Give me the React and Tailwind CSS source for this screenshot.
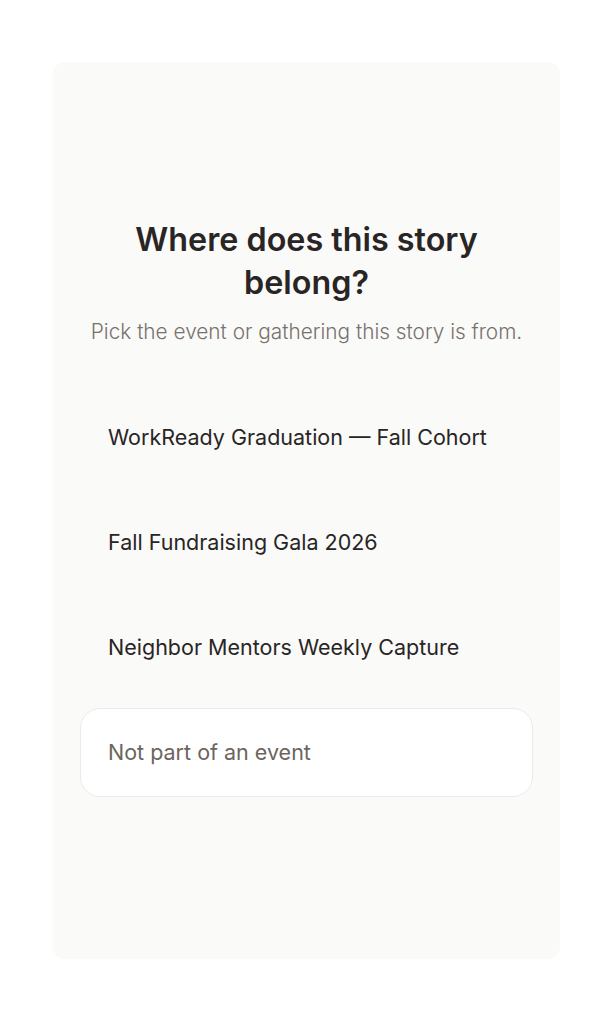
const EVENTS = [
  "WorkReady Graduation — Fall Cohort",
  "Fall Fundraising Gala 2026",
  "Neighbor Mentors Weekly Capture",
];

export default function App() {
  return (
    <div
      className="min-h-screen bg-white px-[53px] pt-[62px] pb-[65px] flex"
      style={{ fontFamily: "Inter, 'Noto Sans', sans-serif" }}
    >
      <div className="flex-1 rounded-[12px] bg-[#fafaf9] px-[27px] pb-[6px] flex flex-col justify-center">
        <div className="text-center">
          <h1 className="text-[32.3px] leading-[43px] font-semibold text-[#292524] px-8">
            Where does this story belong?
          </h1>
          <p className="mt-[13px] text-[20.8px] leading-[30px] font-light text-[#78716c]">
            Pick the event or gathering this story is from.
          </p>
        </div>

        <div className="mt-[46px] flex flex-col gap-[16px]">
          {EVENTS.map((e) => (
            <button
              key={e}
              type="button"
              className="h-[89px] rounded-[20px] border border-transparent px-[27px] text-left text-[21.5px] text-[#292524]"
            >
              {e}
            </button>
          ))}
          <button
            type="button"
            className="h-[89px] rounded-[20px] border border-[#ecebe9] bg-white px-[27px] text-left text-[21.5px] text-[#6b6560]"
          >
            Not part of an event
          </button>
        </div>
      </div>
    </div>
  );
}
